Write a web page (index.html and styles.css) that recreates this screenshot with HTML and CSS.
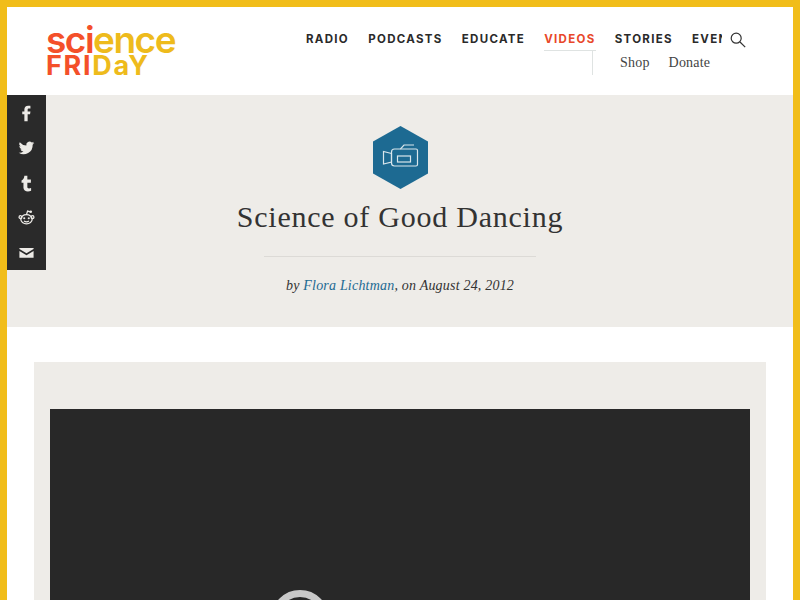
FILE: index.html
```html
<!DOCTYPE html>
<html>
  <head>
    <meta charset="UTF-8" />
    <title>Science of Good Dancing</title>
    <link rel="stylesheet" href="styles.css">
  </head>

  <body>
    <div class="frame">
      <header class="site-header">
        <a class="logo">
          <span class="logo-line"><span class="red">sci</span>ence</span>
          <span class="logo-line logo-second"><span class="red">FRI</span>DaY</span>
        </a>
        <div class="nav-wrap">
          <ul class="main-nav">
            <li>Radio</li>
            <li>Podcasts</li>
            <li>Educate</li>
            <li class="active">Videos</li>
            <li>Stories</li>
            <li>Events</li>
          </ul>
          <div class="sub-nav">
            <span>Shop</span>
            <span>Donate</span>
          </div>
        </div>
        <svg class="search" viewBox="0 0 16 16" width="16" height="16">
          <circle cx="6.2" cy="6.2" r="5" />
          <path d="M10 10l5.2 5.2" />
        </svg>
      </header>

      <section class="hero">
        <div class="share">
          <svg viewBox="0 0 24 24" width="17" height="17"><path d="M17.5 1h-3.2c-3.400 0-5.300 2.200-5.300 5.300V9H6v4.200h3V23h4.600v-9.800h3.400l.6-4.200h-4V6.800c0-1.300.4-2 2-2h2z" /></svg>
          <svg viewBox="0 0 24 24" width="17" height="17"><path d="M23 4.400a9 9 0 0 1-2.600.7 4.500 4.500 0 0 0 2-2.500 9 9 0 0 1-2.900 1.100 4.500 4.500 0 0 0-7.700 4.100A12.800 12.800 0 0 1 2.500 3.100a4.500 4.500 0 0 0 1.400 6 4.500 4.500 0 0 1-2-.6c0 2.200 1.500 4 3.600 4.500a4.500 4.500 0 0 1-2 .1 4.500 4.500 0 0 0 4.200 3.100A9 9 0 0 1 1 18a12.800 12.800 0 0 0 19.700-11.400A9 9 0 0 0 23 4.400z" /></svg>
          <svg viewBox="0 0 24 24" width="17" height="17"><path d="M9 1h4.200v5.400h5V11h-5v6c0 2.200 2.400 2.500 5.300 1.300V22.200c-4.800 2-10.800.8-10.800-4.200v-7H5V7.600C7.400 6.800 8.600 4.400 9 1z" /></svg>
          <svg viewBox="0 0 24 24" width="17" height="17" class="reddit">
            <ellipse cx="12" cy="14.500" rx="8" ry="6.500" />
            <circle cx="3.500" cy="11.500" r="2" />
            <circle cx="20.500" cy="11.500" r="2" />
            <circle cx="18" cy="4" r="1.800" class="solid" />
            <path d="M12 8l1.500-5 4 1" />
            <circle cx="8.800" cy="13" r="1.500" class="solid" />
            <circle cx="15.200" cy="13" r="1.500" class="solid" />
            <path d="M8.500 17c2 1.300 5 1.300 7 0" />
          </svg>
          <svg viewBox="0 0 24 24" width="17" height="17"><path d="M2 5.500h20v1.500l-10 6-10-6zM2 10l10 6 10-6V19.500H2z" /></svg>
        </div>

        <svg class="badge" viewBox="0 0 55 63" width="55" height="63">
          <polygon class="hex" points="27.500,0 55,15.500 55,47.500 27.500,63 0,47.500 0,15.500" />
          <g class="cam">
            <path d="M18.500 27.500l-8-2v12.500l8-2z" />
            <path d="M18.500 26a3 3 0 0 1 3-3h6l3.500-4h10" />
            <path d="M27.500 23h15.500a1.500 1.500 0 0 1 1.500 1.500v14a1.500 1.500 0 0 1-1.500 1.500H21.500a3 3 0 0 1-3-3V26" />
            <rect x="24.500" y="30" width="13" height="6" />
          </g>
        </svg>
        <h1>Science of Good Dancing</h1>
        <hr class="rule" />
        <p class="byline">by <a>Flora Lichtman</a>, on August 24, 2012</p>
      </section>

      <section class="content">
        <div class="video-panel">
          <div class="video">
            <div class="play"></div>
          </div>
        </div>
      </section>
    </div>
  </body>
</html>
```

FILE: styles.css
```css
html,
body {
  margin: 0;
  height: 100%;
  overflow: hidden;
}
body {
  font-family: 'Liberation Serif', serif;
  background: white;
}
.frame {
  height: 100vh;
  box-sizing: border-box;
  border: 7px solid #f1bd19;
  border-bottom: 0;
  overflow: hidden;
  position: relative;
}
.site-header {
  height: 88px;
  box-sizing: border-box;
  display: flex;
  align-items: flex-start;
  padding-left: 39px;
  background: white;
  box-shadow: 0 1px 2px rgba(0, 0, 0, 0.12);
  position: relative;
}
.logo {
  width: 130px;
  flex-shrink: 0;
  margin-top: 17px;
  display: block;
  font-family: Inter, sans-serif;
  font-weight: 600;
  color: #eebb1c;
}
.logo-line {
  display: block;
  white-space: nowrap;
  font-size: 37px;
  line-height: 31px;
  letter-spacing: -1.500px;
}
.logo-second {
  font-size: 27px;
  font-weight: 700;
  line-height: 22px;
  letter-spacing: 1.700px;
}
.red {
  color: #f4502a;
}
.nav-wrap {
  width: 416px;
  margin-left: 130px;
  overflow: hidden;
  flex-shrink: 0;
}
.main-nav {
  list-style: none;
  margin: 25px 0 0;
  padding: 0;
  display: flex;
  gap: 19.200px;
  white-space: nowrap;
  font-family: Inter, sans-serif;
  font-weight: 700;
  font-size: 11.500px;
  line-height: 14px;
  letter-spacing: 1.300px;
  text-transform: uppercase;
  color: #2a2a2a;
}
.main-nav li {
  flex-shrink: 0;
  height: 18px;
}
.main-nav .active {
  color: #e8472a;
  border-bottom: 1px solid #dfe3e2;
}
.sub-nav {
  margin-left: 286px;
  height: 24px;
  border-left: 1px solid #dfe3e2;
  padding-left: 27px;
  display: flex;
  gap: 19px;
  font-size: 14px;
  line-height: 24px;
  letter-spacing: 0.200px;
  color: #444;
}
.search {
  margin: 25px 0 0 8px;
  fill: none;
  stroke: #333;
  stroke-width: 1.200;
}
.hero {
  height: 232px;
  background: #eeece8;
  position: relative;
  display: flex;
  flex-direction: column;
  align-items: center;
  padding-top: 31px;
  box-sizing: border-box;
}
.share {
  position: absolute;
  left: 0;
  top: 0;
  width: 39px;
  height: 175px;
  background: #2a2a2a;
  display: flex;
  flex-direction: column;
  align-items: center;
  justify-content: space-between;
  padding: 10px 0 9px;
  box-sizing: border-box;
}
.share svg {
  fill: #eceae6;
}
.share .reddit {
  fill: none;
  stroke: #eceae6;
  stroke-width: 1.800;
}
.share .reddit .solid {
  fill: #eceae6;
  stroke: none;
}
.badge {
  display: block;
}
.hex {
  fill: #1d6a92;
}
.cam {
  fill: none;
  stroke: #d9e6ec;
  stroke-width: 1.200;
}
h1 {
  margin: 13px 0 0;
  font-weight: 400;
  font-size: 30px;
  line-height: 30px;
  letter-spacing: 0.750px;
  color: #333;
}
.rule {
  width: 272px;
  height: 1px;
  border: 0;
  margin: 24px 0 0;
  background: #dcdad6;
}
.byline {
  margin: 20px 0 0;
  font-style: italic;
  font-size: 14px;
  line-height: 18px;
  letter-spacing: 0.200px;
  color: #333;
}
.byline a {
  color: #1d6a92;
}
.content {
  padding: 35px 27px 0;
}
.video-panel {
  background: #eeece8;
  padding: 47px 16px 20px;
}
.video {
  height: 394px;
  background: #282828;
  position: relative;
}
.play {
  position: absolute;
  left: 221px;
  top: 181px;
  width: 58px;
  height: 58px;
  box-sizing: border-box;
  border: 7px solid #c9c9c9;
  border-radius: 50%;
}
```
